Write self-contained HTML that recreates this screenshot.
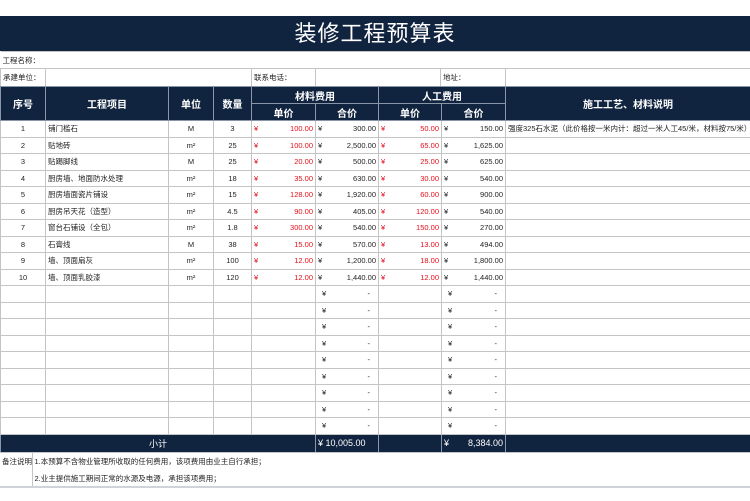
<!DOCTYPE html>
<html><head><meta charset="utf-8"><style>
*{margin:0;padding:0;box-sizing:border-box}
body{width:750px;height:501px;background:#fff;font-family:"Liberation Sans","Noto Sans CJK SC",sans-serif;font-size:8px;color:#222;position:relative;overflow:hidden}
.title{position:absolute;left:0;top:16px;width:750px;height:35px;background:#10233f;color:#fff;font-size:22px;text-align:center;line-height:35px;letter-spacing:1px}
table{position:absolute;left:0;border-collapse:collapse;table-layout:fixed}
td{border:1px solid #c4c4c4;padding:0 2px;white-space:nowrap;overflow:hidden;font-size:7.5px}
.h td{background:#10233f;color:#fff;font-weight:bold;text-align:center;border-color:#8a96a8;font-size:10px}
.c{text-align:center}.r{text-align:right}.red{color:#e0101a}
.y{display:flex;justify-content:space-between}
.sub td{background:#10233f;color:#fff;font-size:9px;border-color:#8a96a8}
</style></head><body>
<div class="title">装修工程预算表</div>
<table style="top:51px;width:750px">
<colgroup><col style="width:45px"><col style="width:206px"><col style="width:64px"><col style="width:125px"><col style="width:65px"><col style="width:245px"></colgroup>
<tr style="height:17px"><td colspan="6" style="border-left:none;border-right:none">工程名称：</td></tr>
<tr style="height:18px"><td>承建单位：</td><td></td><td>联系电话：</td><td></td><td>地址：</td><td></td></tr>
</table>
<table style="top:86px;width:750px">
<colgroup><col style="width:45px"><col style="width:123px"><col style="width:45px"><col style="width:38px"><col style="width:64px"><col style="width:63px"><col style="width:63px"><col style="width:64px"><col style="width:245px"></colgroup>
<tr class="h" style="height:17px"><td rowspan="2">序号</td><td rowspan="2">工程项目</td><td rowspan="2">单位</td><td rowspan="2">数量</td><td colspan="2">材料费用</td><td colspan="2">人工费用</td><td rowspan="2">施工工艺、材料说明</td></tr>
<tr class="h" style="height:17px"><td>单价</td><td>合价</td><td>单价</td><td>合价</td></tr>
<tr style="height:16.5px"><td class="c">1</td><td>铺门槛石</td><td class="c">M</td><td class="c">3</td><td><div class="y red"><span>¥</span><span>100.00</span></div></td><td><div class="y"><span>¥</span><span>300.00</span></div></td><td><div class="y red"><span>¥</span><span>50.00</span></div></td><td><div class="y"><span>¥</span><span>150.00</span></div></td><td>强度325石水泥（此价格按一米内计：超过一米人工45/米，材料按75/米）</td></tr>
<tr style="height:16.5px"><td class="c">2</td><td>贴地砖</td><td class="c">m²</td><td class="c">25</td><td><div class="y red"><span>¥</span><span>100.00</span></div></td><td><div class="y"><span>¥</span><span>2,500.00</span></div></td><td><div class="y red"><span>¥</span><span>65.00</span></div></td><td><div class="y"><span>¥</span><span>1,625.00</span></div></td><td></td></tr>
<tr style="height:16.5px"><td class="c">3</td><td>贴踢脚线</td><td class="c">M</td><td class="c">25</td><td><div class="y red"><span>¥</span><span>20.00</span></div></td><td><div class="y"><span>¥</span><span>500.00</span></div></td><td><div class="y red"><span>¥</span><span>25.00</span></div></td><td><div class="y"><span>¥</span><span>625.00</span></div></td><td></td></tr>
<tr style="height:16.5px"><td class="c">4</td><td>厨房墙、地面防水处理</td><td class="c">m²</td><td class="c">18</td><td><div class="y red"><span>¥</span><span>35.00</span></div></td><td><div class="y"><span>¥</span><span>630.00</span></div></td><td><div class="y red"><span>¥</span><span>30.00</span></div></td><td><div class="y"><span>¥</span><span>540.00</span></div></td><td></td></tr>
<tr style="height:16.5px"><td class="c">5</td><td>厨房墙面瓷片铺设</td><td class="c">m²</td><td class="c">15</td><td><div class="y red"><span>¥</span><span>128.00</span></div></td><td><div class="y"><span>¥</span><span>1,920.00</span></div></td><td><div class="y red"><span>¥</span><span>60.00</span></div></td><td><div class="y"><span>¥</span><span>900.00</span></div></td><td></td></tr>
<tr style="height:16.5px"><td class="c">6</td><td>厨房吊天花（造型）</td><td class="c">m²</td><td class="c">4.5</td><td><div class="y red"><span>¥</span><span>90.00</span></div></td><td><div class="y"><span>¥</span><span>405.00</span></div></td><td><div class="y red"><span>¥</span><span>120.00</span></div></td><td><div class="y"><span>¥</span><span>540.00</span></div></td><td></td></tr>
<tr style="height:16.5px"><td class="c">7</td><td>窗台石铺设（全包）</td><td class="c">m²</td><td class="c">1.8</td><td><div class="y red"><span>¥</span><span>300.00</span></div></td><td><div class="y"><span>¥</span><span>540.00</span></div></td><td><div class="y red"><span>¥</span><span>150.00</span></div></td><td><div class="y"><span>¥</span><span>270.00</span></div></td><td></td></tr>
<tr style="height:16.5px"><td class="c">8</td><td>石膏线</td><td class="c">M</td><td class="c">38</td><td><div class="y red"><span>¥</span><span>15.00</span></div></td><td><div class="y"><span>¥</span><span>570.00</span></div></td><td><div class="y red"><span>¥</span><span>13.00</span></div></td><td><div class="y"><span>¥</span><span>494.00</span></div></td><td></td></tr>
<tr style="height:16.5px"><td class="c">9</td><td>墙、顶面扇灰</td><td class="c">m²</td><td class="c">100</td><td><div class="y red"><span>¥</span><span>12.00</span></div></td><td><div class="y"><span>¥</span><span>1,200.00</span></div></td><td><div class="y red"><span>¥</span><span>18.00</span></div></td><td><div class="y"><span>¥</span><span>1,800.00</span></div></td><td></td></tr>
<tr style="height:16.5px"><td class="c">10</td><td>墙、顶面乳胶漆</td><td class="c">m²</td><td class="c">120</td><td><div class="y red"><span>¥</span><span>12.00</span></div></td><td><div class="y"><span>¥</span><span>1,440.00</span></div></td><td><div class="y red"><span>¥</span><span>12.00</span></div></td><td><div class="y"><span>¥</span><span>1,440.00</span></div></td><td></td></tr>
<tr style="height:16.5px"><td></td><td></td><td></td><td></td><td></td><td><div class="y" style="padding:0 6px 0 4px"><span>¥</span><span>-</span></div></td><td></td><td><div class="y" style="padding:0 6px 0 4px"><span>¥</span><span>-</span></div></td><td></td></tr>
<tr style="height:16.5px"><td></td><td></td><td></td><td></td><td></td><td><div class="y" style="padding:0 6px 0 4px"><span>¥</span><span>-</span></div></td><td></td><td><div class="y" style="padding:0 6px 0 4px"><span>¥</span><span>-</span></div></td><td></td></tr>
<tr style="height:16.5px"><td></td><td></td><td></td><td></td><td></td><td><div class="y" style="padding:0 6px 0 4px"><span>¥</span><span>-</span></div></td><td></td><td><div class="y" style="padding:0 6px 0 4px"><span>¥</span><span>-</span></div></td><td></td></tr>
<tr style="height:16.5px"><td></td><td></td><td></td><td></td><td></td><td><div class="y" style="padding:0 6px 0 4px"><span>¥</span><span>-</span></div></td><td></td><td><div class="y" style="padding:0 6px 0 4px"><span>¥</span><span>-</span></div></td><td></td></tr>
<tr style="height:16.5px"><td></td><td></td><td></td><td></td><td></td><td><div class="y" style="padding:0 6px 0 4px"><span>¥</span><span>-</span></div></td><td></td><td><div class="y" style="padding:0 6px 0 4px"><span>¥</span><span>-</span></div></td><td></td></tr>
<tr style="height:16.5px"><td></td><td></td><td></td><td></td><td></td><td><div class="y" style="padding:0 6px 0 4px"><span>¥</span><span>-</span></div></td><td></td><td><div class="y" style="padding:0 6px 0 4px"><span>¥</span><span>-</span></div></td><td></td></tr>
<tr style="height:16.5px"><td></td><td></td><td></td><td></td><td></td><td><div class="y" style="padding:0 6px 0 4px"><span>¥</span><span>-</span></div></td><td></td><td><div class="y" style="padding:0 6px 0 4px"><span>¥</span><span>-</span></div></td><td></td></tr>
<tr style="height:16.5px"><td></td><td></td><td></td><td></td><td></td><td><div class="y" style="padding:0 6px 0 4px"><span>¥</span><span>-</span></div></td><td></td><td><div class="y" style="padding:0 6px 0 4px"><span>¥</span><span>-</span></div></td><td></td></tr>
<tr style="height:16.5px"><td></td><td></td><td></td><td></td><td></td><td><div class="y" style="padding:0 6px 0 4px"><span>¥</span><span>-</span></div></td><td></td><td><div class="y" style="padding:0 6px 0 4px"><span>¥</span><span>-</span></div></td><td></td></tr>
<tr class="sub" style="height:18px"><td colspan="5" class="c">小计</td><td><span style="font-size:9px">¥ 10,005.00</span></td><td></td><td><div class="y"><span>¥</span><span>8,384.00</span></div></td><td></td></tr>
</table>
<table style="top:452px;width:750px">
<colgroup><col style="width:32px"><col style="width:718px"></colgroup>
<tr style="height:18px"><td style="border-left:none;border-right:none;border-bottom:none">备注说明：</td><td style="border-right:none;border-bottom:none">1.本预算不含物业管理所收取的任何费用，该项费用由业主自行承担；</td></tr>
<tr style="height:16px"><td style="border:none"></td><td style="border-top:none;border-right:none;border-bottom:none">2.业主提供施工期间正常的水源及电源，承担该项费用；</td></tr>
</table>
<div style="position:absolute;left:0;top:486px;width:750px;height:2px;background:#d0d4d8"></div>
</body></html>
